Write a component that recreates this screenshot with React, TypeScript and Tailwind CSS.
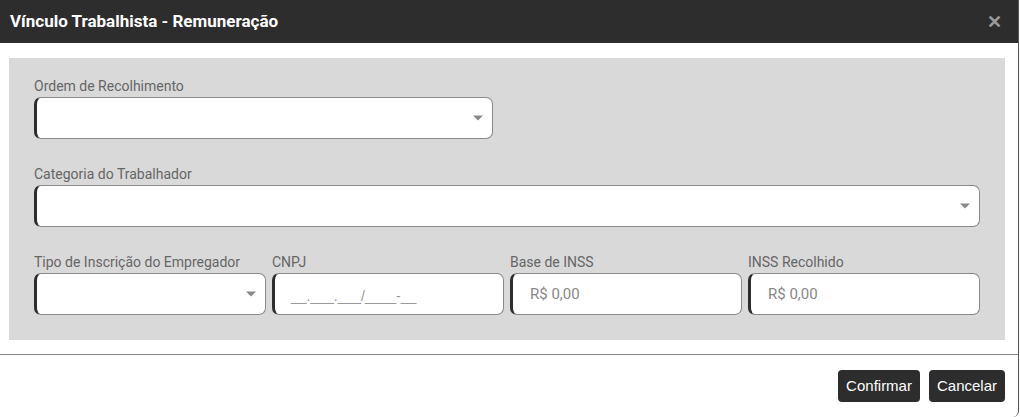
import React from "react";

const Caret = () => (
  <span className="absolute right-[9px] top-1/2 -translate-y-1/2 w-0 h-0 border-l-[5px] border-r-[5px] border-t-[5px] border-l-transparent border-r-transparent border-t-[#888]" />
);

const Field: React.FC<{
  label: string;
  width?: string;
  select?: boolean;
  placeholder?: string;
  mask?: boolean;
}> = ({ label, width = "w-full", select, placeholder, mask }) => {
  return (
    <div className={`flex flex-col ${width}`}>
      <label className="text-[14px] leading-[16px] text-[#666] mb-[3px] whitespace-nowrap">
        {label}
      </label>
      <div className="relative h-[42px] bg-white border border-[#8a8a8a] border-l-[3px] border-l-[#2d2d2d] rounded-[7px] flex items-center">
        {placeholder && (
          <span className="pl-[17px] text-[15px] text-[#888]">{placeholder}</span>
        )}
        {mask && (
          <span className="pl-[16px] pt-[4px] text-[14px] font-['Liberation_Sans',sans-serif] text-[#999]">
            __.___.___/____-__
          </span>
        )}
        {select && <Caret />}
      </div>
    </div>
  );
};

export default function App() {
  return (
    <div className="w-[1020px] h-[417px] bg-white font-['Roboto',sans-serif] overflow-hidden">
      <div className="w-[1019px] h-[417px] border-r border-[#555] rounded-br-[6px] flex flex-col bg-white">
        <div className="h-[43px] bg-[#2d2d2d] flex items-center justify-between pl-[10px] pr-[16px] shrink-0">
          <h1 className="text-white font-bold text-[17px]">Vínculo Trabalhista - Remuneração</h1>
          <span className="text-[#9a9a9a] font-bold text-[18px] leading-none">✕</span>
        </div>

        <div className="pl-[9px] pr-[13px] pt-[15px] pb-[14px] shrink-0">
          <div className="bg-[#d9d9d9] px-[25px] pt-[20px] pb-[25px] flex flex-col gap-[27px]">
            <Field label="Ordem de Recolhimento" width="w-[459px]" select />
            <Field label="Categoria do Trabalhador" select />
            <div className="grid grid-cols-4 gap-[6px]">
              <Field label="Tipo de Inscrição do Empregador" select />
              <Field label="CNPJ" mask />
              <Field label="Base de INSS" placeholder="R$ 0,00" />
              <Field label="INSS Recolhido" placeholder="R$ 0,00" />
            </div>
          </div>
        </div>

        <div className="border-t border-[#888] flex justify-end gap-[9px] pt-[15px] pr-[13px]">
          <button className="h-[32px] px-[8px] bg-[#2d2d2d] text-white rounded-[4px] text-[15px] font-['Liberation_Sans',sans-serif]">
            Confirmar
          </button>
          <button className="h-[32px] px-[8px] bg-[#2d2d2d] text-white rounded-[4px] text-[15px] font-['Liberation_Sans',sans-serif]">
            Cancelar
          </button>
        </div>
      </div>
    </div>
  );
}
